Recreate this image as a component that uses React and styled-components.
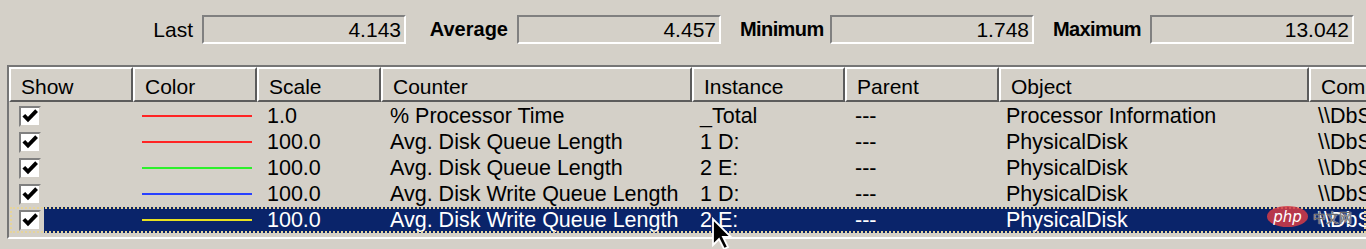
import React from "react";
import styled, { createGlobalStyle } from "styled-components";

const Global = createGlobalStyle`
  html, body { margin: 0; padding: 0; }
  body {
    background: #d4d0c8;
    font-family: "Liberation Sans", Arial, sans-serif;
    color: #000;
    overflow: hidden;
  }
`;

const Page = styled.div`
  position: relative;
  width: 1366px;
  height: 249px;
  overflow: hidden;
  background: #d4d0c8;
`;

const StatsBar = styled.div`
  display: flex;
  justify-content: flex-end;
  align-items: center;
  gap: 19px;
  padding: 15px 12px 0 0;
  height: 29px;
`;

const Stat = styled.div`
  display: flex;
  align-items: center;
  gap: 9px;
`;

const StatLabel = styled.span`
  width: ${(p) => p.$w}px;
  text-align: right;
  white-space: nowrap;
  font-size: ${(p) => (p.$bold ? 20 : 21)}px;
  font-weight: ${(p) => (p.$bold ? 700 : 400)};
  letter-spacing: ${(p) => (p.$tight ? -0.6 : 0)}px;
  line-height: 29px;
`;

const StatBox = styled.div`
  box-sizing: border-box;
  width: 204px;
  height: 29px;
  border-top: 2px solid #808080;
  border-left: 2px solid #808080;
  border-bottom: 2px solid #fff;
  border-right: 2px solid #fff;
  text-align: right;
  padding-right: 3px;
  font-size: 21px;
  line-height: 26px;
`;

const Frame = styled.div`
  margin: 21px 0 0 7px;
  border-top: 2px solid #767676;
  border-left: 2px solid #767676;
  border-bottom: 2px solid #fff;
  height: 170px;
  overflow: hidden;
`;

const cols = "124px 124px 124px 311px 153px 154px 310px 220px";

const HeaderRow = styled.div`
  display: grid;
  grid-template-columns: ${cols};
  height: 35px;
`;

const HeaderCell = styled.div`
  box-sizing: border-box;
  border-top: 2px solid #fff;
  border-left: 2px solid #fff;
  border-right: 2px solid #5c5c5c;
  border-bottom: 2px solid #5c5c5c;
  padding: 5px 0 0 10px;
  font-size: 21px;
  line-height: 26px;
  white-space: nowrap;
  overflow: hidden;
`;

const Rows = styled.div`
  padding-top: 1px;
`;

const Row = styled.div`
  position: relative;
  display: grid;
  grid-template-columns: ${cols};
  height: 26px;
  align-items: center;
  font-size: 21.5px;
  line-height: 26px;
  color: ${(p) => (p.$selected ? "#fff" : "#000")};
  &::after {
    content: "";
    display: ${(p) => (p.$selected ? "block" : "none")};
    position: absolute;
    inset: 0 0 0 1px;
    border: 2px dotted #e6d49a;
    pointer-events: none;
  }
`;

const Cell = styled.div`
  height: 26px;
  padding-left: ${(p) => p.$pad ?? 9}px;
  white-space: nowrap;
  overflow: hidden;
  display: flex;
  align-items: center;
  background: ${(p) => (p.$selected ? "#0a246a" : "transparent")};
`;

const ShowCell = styled(Cell)`
  padding-left: 0;
  background: ${(p) =>
    p.$selected
      ? "linear-gradient(to right, transparent 35px, #0a246a 35px)"
      : "transparent"};
`;

const Check = styled.div`
  box-sizing: border-box;
  margin-left: 10px;
  width: 22px;
  height: 21px;
  border-top: 2px solid #808080;
  border-left: 2px solid #808080;
  border-right: 2px solid #d4d0c8;
  border-bottom: 2px solid #d4d0c8;
  background: #fff;
  display: flex;
  align-items: center;
  justify-content: center;
`;

const ColorLine = styled.div`
  width: 110px;
  height: 2px;
  background: ${(p) => p.$c};
`;

const Cursor = styled.svg`
  position: absolute;
  left: 711px;
  top: 217px;
  pointer-events: none;
`;

const Watermark = styled.div`
  position: absolute;
  left: 1267px;
  top: 206px;
  display: flex;
  align-items: center;
  gap: 5px;
  pointer-events: none;
`;

const Pill = styled.span`
  width: 41px;
  height: 21px;
  border-radius: 50%;
  background: rgba(214, 60, 70, 0.85);
  color: #fff;
  font-style: italic;
  font-size: 15px;
  font-family: "DejaVu Sans", sans-serif;
  display: flex;
  align-items: center;
  justify-content: center;
`;

const WmText = styled.span`
  font-size: 13px;
  color: #6a6a6a;
  text-shadow: 0 0 1px #d8d8d8, 0 0 1px #d8d8d8;
  font-family: "Noto Sans CJK SC", sans-serif;
`;

const data = [
  { color: "#ff2424", scale: "1.0", counter: "% Processor Time", instance: "_Total", obj: "Processor Information" },
  { color: "#ff2424", scale: "100.0", counter: "Avg. Disk Queue Length", instance: "1 D:", obj: "PhysicalDisk" },
  { color: "#2cf02c", scale: "100.0", counter: "Avg. Disk Queue Length", instance: "2 E:", obj: "PhysicalDisk" },
  { color: "#2840ff", scale: "100.0", counter: "Avg. Disk Write Queue Length", instance: "1 D:", obj: "PhysicalDisk" },
  { color: "#e8e020", scale: "100.0", counter: "Avg. Disk Write Queue Length", instance: "2 E:", obj: "PhysicalDisk", selected: true },
];

const headers = ["Show", "Color", "Scale", "Counter", "Instance", "Parent", "Object", "Computer"];

const CheckMark = () => (
  <svg width="17" height="16" viewBox="0 0 17 16">
    <path d="M1.8 7.2 L6 11.6 L14.6 2.6" fill="none" stroke="#000" strokeWidth="3.8" strokeLinejoin="miter" />
  </svg>
);

export default function App() {
  return (
    <Page>
      <Global />
      <StatsBar>
        <Stat>
          <StatLabel $w={41}>Last</StatLabel>
          <StatBox>4.143</StatBox>
        </Stat>
        <Stat>
          <StatLabel $w={83} $bold>Average</StatLabel>
          <StatBox>4.457</StatBox>
        </Stat>
        <Stat>
          <StatLabel $w={81} $bold $tight>Minimum</StatLabel>
          <StatBox>1.748</StatBox>
        </Stat>
        <Stat>
          <StatLabel $w={88} $bold $tight>Maximum</StatLabel>
          <StatBox>13.042</StatBox>
        </Stat>
      </StatsBar>
      <Frame>
        <HeaderRow>
          {headers.map((h) => (
            <HeaderCell key={h}>{h}</HeaderCell>
          ))}
        </HeaderRow>
        <Rows>
          {data.map((r, i) => (
            <Row key={i} $selected={r.selected}>
              <ShowCell $selected={r.selected}>
                <Check>
                  <CheckMark />
                </Check>
              </ShowCell>
              <Cell $selected={r.selected}>
                <ColorLine $c={r.color} />
              </Cell>
              <Cell $selected={r.selected} $pad={10}>{r.scale}</Cell>
              <Cell $selected={r.selected}>{r.counter}</Cell>
              <Cell $selected={r.selected} $pad={8}>{r.instance}</Cell>
              <Cell $selected={r.selected} $pad={10}>---</Cell>
              <Cell $selected={r.selected} $pad={7}>{r.obj}</Cell>
              <Cell $selected={r.selected}>\\DbServer</Cell>
            </Row>
          ))}
        </Rows>
      </Frame>
      <Cursor width="26" height="34" viewBox="0 0 13 17">
        <path d="M1 1 L1 14 L4 11 L6.5 16 L8.5 15 L6 10 L10 10 Z" fill="#000" stroke="#fff" strokeWidth="0.9" strokeLinejoin="miter" />
      </Cursor>
      <Watermark>
        <Pill>php</Pill>
        <WmText>中文网</WmText>
      </Watermark>
    </Page>
  );
}
